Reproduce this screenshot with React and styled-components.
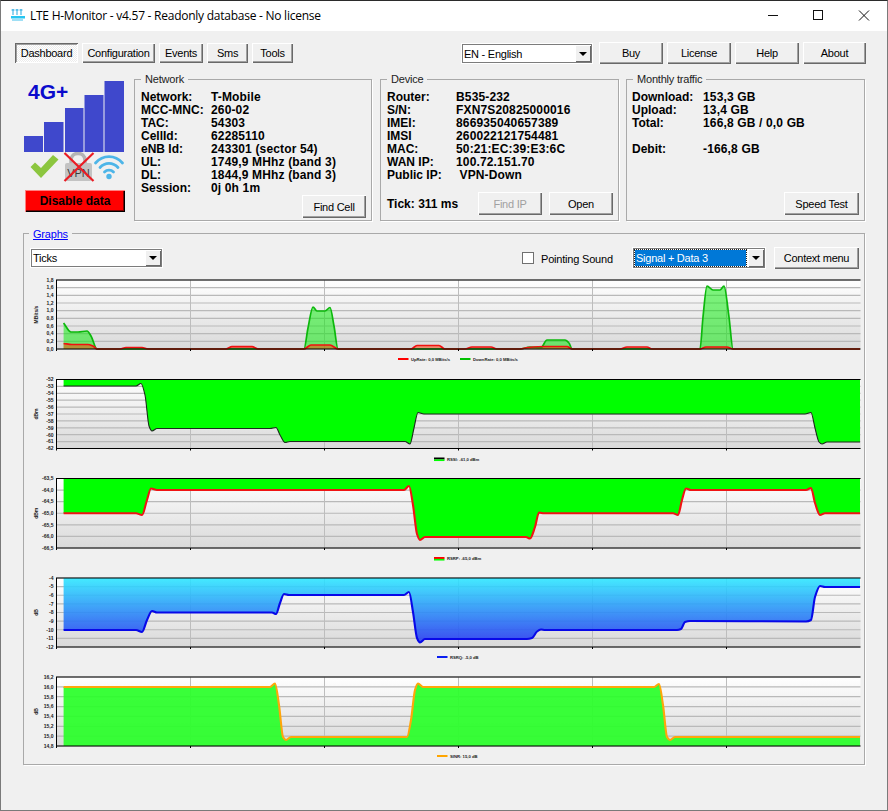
import styled, { createGlobalStyle } from "styled-components";

const GlobalStyle = createGlobalStyle`
  html, body {
    margin: 0;
    padding: 0;
    background: #f0f0f0;
  }
  * {
    box-sizing: border-box;
  }
`;

// monotone cubic through the points, overshoots come from the points themselves
const spline = (pts) => {
  const n = pts.length;
  const sec = [];
  for (let i = 0; i < n - 1; i++) {
    sec.push((pts[i + 1][1] - pts[i][1]) / (pts[i + 1][0] - pts[i][0]));
  }
  const m = pts.map((_, i) => {
    if (i === 0) return sec[0];
    if (i === n - 1) return sec[n - 2];
    if (sec[i - 1] * sec[i] <= 0) return 0;
    return (2 * sec[i - 1] * sec[i]) / (sec[i - 1] + sec[i]);
  });
  let d = `M${pts[0][0]} ${pts[0][1]}`;
  for (let i = 0; i < n - 1; i++) {
    const h = (pts[i + 1][0] - pts[i][0]) / 3;
    const c1y = pts[i][1] + m[i] * h;
    const c2y = pts[i + 1][1] - m[i + 1] * h;
    d += ` C${(pts[i][0] + h).toFixed(1)} ${c1y.toFixed(1)} ${(pts[i + 1][0] - h).toFixed(1)} ${c2y.toFixed(1)} ${pts[i + 1][0]} ${pts[i + 1][1]}`;
  }
  return d;
};

const X0 = 56.5;
const X1 = 860.5;
const START = 63.6;
const VGRID = [190.5, 324.5, 458.5, 592.5, 726.5];

const closeTo = (pts, y) =>
  `${spline(pts)} L${pts[pts.length - 1][0]} ${y} L${pts[0][0]} ${y} Z`;

const downPts = [
  [START, 323], [71, 332], [78, 332], [87, 331], [91, 336], [97, 349], [304, 349],
  [308, 328], [313, 307], [317, 311], [325, 311], [330, 307.5], [334, 326], [338, 349],
  [520, 349], [530, 347], [541, 347.5], [547, 340], [565, 340], [569, 343], [572, 349],
  [700, 349], [703, 317], [707, 286], [713, 290], [720, 290], [724, 286], [729, 317], [733, 349],
  [860, 349],
];

const upPts = [
  [START, 343.5], [72, 344.5], [88, 344.5], [93, 346], [97, 349], [120, 349], [126, 347.5], [142, 347.5], [148, 349],
  [226, 349], [232, 346.7], [252, 346.7], [258, 349], [304, 349], [311, 345], [330, 345], [338, 349],
  [411, 349], [417, 345.5], [439, 345.5], [445, 349], [465, 349], [472, 347], [491, 347], [497, 349],
  [520, 349], [528, 347.5], [545, 346.5], [567, 346.5], [572, 349], [620, 349], [627, 347], [647, 347], [652, 349],
  [700, 349], [706, 347], [727, 347], [733, 349], [860, 349],
];

const rssiPts = [
  [START, 386], [136, 386], [141, 383.5], [145, 395], [149, 426], [152, 431], [157, 428.5], [270, 428.5],
  [276, 427.5], [280, 435], [285, 442.5], [290, 441.5], [405, 441.5], [410, 444], [414, 428], [418, 412.5], [424, 414],
  [805, 414], [811, 412.5], [815, 428], [819, 442], [822, 444], [827, 442], [860, 442],
];

const rsrpPts = [
  [START, 513.3], [136, 513.3], [142, 515], [147, 500], [151, 488.5], [157, 490], [404, 490], [409, 486], [413, 505],
  [417, 534], [420, 540], [425, 537], [526, 537], [530, 538.5], [535, 527], [539, 512.5], [544, 513.3], [673, 513.3],
  [678, 515], [682, 500], [686, 488.5], [691, 490], [806, 490], [811, 488], [815, 503], [820, 515], [825, 513.3], [860, 513.3],
];

const rsrqPts = [
  [START, 630], [136, 630], [142, 632], [147, 620], [152, 611], [157, 612.5], [272, 612.5], [276, 614], [280, 603], [284, 594],
  [289, 595], [404, 595], [409, 592], [413, 612], [417, 638], [420, 642.5], [425, 639], [527, 639], [532, 638], [537, 631.5],
  [541, 629.5], [545, 630], [677, 630], [681, 629], [685, 622], [690, 621], [806, 621.5], [811, 620], [815, 597], [820, 586], [825, 587], [860, 587],
];

const sinrPts = [
  [START, 687], [270, 687], [275, 683.5], [279, 705], [283, 737], [286, 740], [291, 737], [407, 737], [411, 720], [415, 690],
  [418, 683.5], [423, 687], [654, 687], [659, 684], [663, 705], [667, 737], [670, 740], [675, 737], [860, 737],
];

const Chart = ({ index, id, top, bottom, labels, unit, children, legend }) => {
  const step = (bottom - top) / (labels.length - 1);
  return (
    <ChartSvg viewBox={`24 ${273 + 99 * index} 840 99`} aria-label={unit}>
      <defs>
        <linearGradient id={`bg${id}`} x1="0" y1="0" x2="0" y2="1">
          <stop offset="0" stopColor="#ffffff" />
          <stop offset="1" stopColor="#d9d9d9" />
        </linearGradient>
      </defs>
      <rect x={X0} y={top} width={X1 - X0} height={bottom - top} fill={`url(#bg${id})`} />
      {labels.map((l, i) => (
        <line key={l} x1={X0} x2={X1} y1={top + step * i} y2={top + step * i} stroke="#b9b9b9" strokeWidth="1.2" />
      ))}
      {VGRID.map((x) => (
        <line key={x} x1={x} x2={x} y1={top} y2={bottom} stroke="#bdbdbd" strokeWidth="1" />
      ))}
      {children}
      <line x1={X0 - 0.5} x2={X1} y1={top} y2={top} stroke="#000" strokeWidth="1.2" />
      <line x1={X0 - 0.5} x2={X1} y1={bottom} y2={bottom} stroke="#000" strokeWidth="1.2" />
      <line x1={X0} x2={X0} y1={top} y2={bottom + 2} stroke="#000" strokeWidth="1" />
      {VGRID.map((x) => (
        <line key={x} x1={x} x2={x} y1={bottom} y2={bottom + 2} stroke="#000" strokeWidth="1" />
      ))}
      {labels.map((l, i) => (
        <AxisText key={l} x={X0 - 3} y={top + step * i + 1.8} textAnchor="end">
          {l}
        </AxisText>
      ))}
      <AxisText
        x={38}
        y={(top + bottom) / 2}
        textAnchor="middle"
        transform={`rotate(-90 38 ${(top + bottom) / 2})`}
      >
        {unit}
      </AxisText>
      {legend.map((item) => (
        <g key={item.text}>
          <line x1={item.x} x2={item.x + 10.5} y1={bottom + 10} y2={bottom + 10} stroke={item.color} strokeWidth="2" />
          {item.under && (
            <line x1={item.x} x2={item.x + 10.5} y1={bottom + 11.7} y2={bottom + 11.7} stroke={item.under} strokeWidth="1.7" />
          )}
          <LegendText x={item.x + 13} y={bottom + 12}>
            {item.text}
          </LegendText>
        </g>
      ))}
    </ChartSvg>
  );
};

const Signal = () => (
  <SignalBox>
    <NetType>4G+</NetType>
    <BarsSvg viewBox="0 0 101 71" width="101" height="71">
      {[
        [0, 55, 19],
        [20, 41, 19.5],
        [41, 27, 18.5],
        [60.5, 14, 19],
        [80.5, 0, 19.5],
      ].map(([x, y, w]) => (
        <rect key={x} x={x} y={y} width={w} height={71 - y} fill="#3f48cc" />
      ))}
    </BarsSvg>
    <StatusIcons viewBox="0 0 96 30" width="96" height="30">
      <path d="M0.5 15 L5 10.5 L11 16 L23 3 L28.5 7.5 L11 26 Z" fill="#8cc63f" />
      <path d="M41 12 V8.5 C41 -1 55 -1 55 8.5 V12" fill="none" stroke="#b4b4b4" strokeWidth="3.5" />
      <rect x="35" y="11" width="27" height="18" rx="2" fill="#c3c3c3" />
      <VpnText x="48.5" y="24.5" textAnchor="middle">
        VPN
      </VpnText>
      <path d="M34.5 1 L63.5 29 M63.5 1 L34.5 29" stroke="#ea1c24" strokeWidth="2.2" />
      <g fill="none" stroke="#4db5e8" strokeLinecap="round" strokeWidth="2.8">
        <path d="M65.5 11 C73 2.5 85 2.5 92.5 11" />
        <path d="M70 15.5 C75 10 83 10 88 15.5" />
        <path d="M74.5 20 C77 17.5 81 17.5 83.5 20" />
      </g>
      <circle cx="79" cy="24.5" r="2.7" fill="#4db5e8" />
    </StatusIcons>
    <DisableButton>Disable data</DisableButton>
  </SignalBox>
);

const InfoRows = ({ rows, labelWidth }) => (
  <Rows>
    {rows.map(([label, value], i) => (
      <Row key={label + i} $labelWidth={labelWidth}>
        <span>{label}</span>
        <RowValue>{value}</RowValue>
      </Row>
    ))}
  </Rows>
);

const networkRows = [
  ["Network:", "T-Mobile"],
  ["MCC-MNC:", "260-02"],
  ["TAC:", "54303"],
  ["CellId:", "62285110"],
  ["eNB Id:", "243301 (sector 54)"],
  ["UL:", "1749,9 MHhz (band 3)"],
  ["DL:", "1844,9 MHhz (band 3)"],
  ["Session:", "0j 0h 1m"],
];

const deviceRows = [
  ["Router:", "B535-232"],
  ["S/N:", "FXN7S20825000016"],
  ["IMEI:", "866935040657389"],
  ["IMSI", "260022121754481"],
  ["MAC:", "50:21:EC:39:E3:6C"],
  ["WAN IP:", "100.72.151.70"],
  ["Public IP:", "\u00a0VPN-Down"],
];

const trafficRows = [
  ["Download:", "153,3 GB"],
  ["Upload:", "13,4 GB"],
  ["Total:", "166,8 GB / 0,0 GB"],
  ["\u00a0", ""],
  ["Debit:", "-166,8 GB"],
];

const App = () => {
  return (
    <Window>
      <GlobalStyle />
      <TitleBar>
        <AppIcon viewBox="0 0 16 14" width="16" height="14">
          <g fill="none" stroke="#27a9e1" strokeWidth="1">
            <path d="M3 1 V7 M7 1 V7 M11 1 V7" />
            <path d="M1.5 2 H4.5 M5.5 2 H8.5 M9.5 2 H12.5" />
          </g>
          <rect x="1" y="8" width="14" height="2.5" fill="#27c5f1" />
          <rect x="2" y="11" width="11" height="2" fill="#9fdff5" />
        </AppIcon>
        <TitleText>LTE H-Monitor - v4.57 - Readonly database - No license</TitleText>
        <WindowControls>
          <svg width="120" height="12" viewBox="0 0 120 12">
            <g fill="none" stroke="#111" strokeWidth="1">
              <path d="M0 5.5 H10" />
              <rect x="45.5" y="0.5" width="9" height="9" />
              <path d="M91 0.5 L101 10.5 M101 0.5 L91 10.5" />
            </g>
          </svg>
        </WindowControls>
      </TitleBar>

      <Toolbar>
        <TabButton $active $width={63}>Dashboard</TabButton>
        <TabButton $width={73}>Configuration</TabButton>
        <TabButton $width={44}>Events</TabButton>
        <TabButton $width={41}>Sms</TabButton>
        <TabButton $width={41}>Tools</TabButton>
        <Spacer />
        <Combo $width={132} $height={21}>
          <ComboText>EN - English</ComboText>
          <ComboArrow />
        </Combo>
        <ToolbarRight>
          <TabButton $width={64} $height={22}>Buy</TabButton>
          <TabButton $width={64} $height={22}>License</TabButton>
          <TabButton $width={64} $height={22}>Help</TabButton>
          <TabButton $width={63} $height={22}>About</TabButton>
        </ToolbarRight>
      </Toolbar>

      <Panels>
        <Signal />
        <GroupBox $width={238} $gap={8}>
          <GroupLabel>Network</GroupLabel>
          <InfoRows rows={networkRows} labelWidth={70} />
          <GroupFooter>
            <TabButton $width={64} $height={23}>Find Cell</TabButton>
          </GroupFooter>
        </GroupBox>
        <GroupBox $width={239} $gap={7}>
          <GroupLabel>Device</GroupLabel>
          <InfoRows rows={deviceRows} labelWidth={69} />
          <GroupFooter>
            <TickText>Tick: 311 ms</TickText>
            <FooterButtons>
              <TabButton $width={64} $height={23} $disabled>Find IP</TabButton>
              <TabButton $width={64} $height={23}>Open</TabButton>
            </FooterButtons>
          </GroupFooter>
        </GroupBox>
        <GroupBox $width={239} $pad={5}>
          <GroupLabel>Monthly traffic</GroupLabel>
          <InfoRows rows={trafficRows} labelWidth={71} />
          <GroupFooter>
            <TabButton $width={75} $height={23}>Speed Test</TabButton>
          </GroupFooter>
        </GroupBox>
      </Panels>

      <GraphsBox>
        <GraphsLabel>Graphs</GraphsLabel>
        <GraphControls>
          <Combo $width={133} $height={20}>
            <ComboText>Ticks</ComboText>
            <ComboArrow />
          </Combo>
          <ControlsRight>
            <CheckBox />
            <SoundLabel>Pointing Sound</SoundLabel>
            <Combo $width={134} $height={22}>
              <ComboText $selected>Signal + Data 3</ComboText>
              <ComboArrow />
            </Combo>
            <ContextGap />
            <TabButton $width={85} $height={22}>Context menu</TabButton>
          </ControlsRight>
        </GraphControls>

        <Chart
          index={0}
          id="rate"
          top={280}
          bottom={349}
          unit="MBits/s"
          labels={["1,8", "1,6", "1,4", "1,2", "1,0", "0,8", "0,6", "0,4", "0,2", "0,0"]}
          legend={[
            { x: 398, color: "#ff0000", text: "UpRate: 0,0 MBits/s" },
            { x: 460, color: "#00c000", text: "DownRate: 0,0 MBits/s" },
          ]}
        >
          <path d={closeTo(downPts, 349)} fill="#00ee00" fillOpacity="0.5" />
          <path d={closeTo(upPts, 349)} fill="#ff4000" fillOpacity="0.5" />
          <path d={spline(downPts)} fill="none" stroke="#0cb80c" strokeWidth="1.7" />
          <path d={spline(upPts)} fill="none" stroke="#f01010" strokeWidth="1.7" />
        </Chart>

        <Chart
          index={1}
          id="rssi"
          top={379.5}
          bottom={448.5}
          unit="dBm"
          labels={["-52", "-53", "-54", "-55", "-56", "-57", "-58", "-59", "-60", "-61", "-62"]}
          legend={[{ x: 434, color: "#000", under: "#00ff00", text: "RSSI: -61,0 dBm" }]}
        >
          <path d={closeTo(rssiPts, 379.5)} fill="#00ff00" />
          <path d={spline(rssiPts)} fill="none" stroke="#1c2a1c" strokeWidth="1.1" />
        </Chart>

        <Chart
          index={2}
          id="rsrp"
          top={478.5}
          bottom={548}
          unit="dBm"
          labels={["-63,5", "-64,0", "-64,5", "-65,0", "-65,5", "-66,0", "-66,5"]}
          legend={[{ x: 434, color: "#ff0000", under: "#00ff00", text: "RSRP: -65,0 dBm" }]}
        >
          <path d={closeTo(rsrpPts, 478.5)} fill="#00ff00" />
          <path d={spline(rsrpPts)} fill="none" stroke="#f01414" strokeWidth="2.1" />
        </Chart>

        <Chart
          index={3}
          id="rsrq"
          top={578}
          bottom={647}
          unit="dB"
          labels={["-4", "-5", "-6", "-7", "-8", "-9", "-10", "-11", "-12"]}
          legend={[{ x: 437, color: "#0a1ef0", text: "RSRQ: -5,0 dB" }]}
        >
          <defs>
            <linearGradient id="rsrqFill" gradientUnits="userSpaceOnUse" x1="0" y1="578" x2="0" y2="642">
              <stop offset="0" stopColor="#2fe8ff" />
              <stop offset="1" stopColor="#2a3cf2" />
            </linearGradient>
          </defs>
          <path d={closeTo(rsrqPts, 578)} fill="url(#rsrqFill)" fillOpacity="0.9" />
          <path d={spline(rsrqPts)} fill="none" stroke="#0808e8" strokeWidth="2.1" />
        </Chart>

        <Chart
          index={4}
          id="sinr"
          top={677}
          bottom={746}
          unit="dB"
          labels={["16,2", "16,0", "15,8", "15,6", "15,4", "15,2", "15,0", "14,8"]}
          legend={[{ x: 437, color: "#ffa500", text: "SINR: 15,0 dB" }]}
        >
          <path d={closeTo(sinrPts, 746)} fill="#2aff2a" fillOpacity="0.93" />
          <path d={spline(sinrPts)} fill="none" stroke="#ffa50a" strokeWidth="2.1" />
        </Chart>
      </GraphsBox>
    </Window>
  );
};

const uiFont = `"Liberation Sans", Arial, sans-serif`;

const Window = styled.div`
  width: 888px;
  height: 811px;
  overflow: hidden;
  display: flex;
  flex-direction: column;
  background: #f0f0f0;
  border-top: 1px solid #2b2b2b;
  border-left: 1px solid #7a7a7a;
  border-right: 1px solid #7a7a7a;
  border-bottom: 1px solid #7a7a7a;
  font-family: ${uiFont};
  font-size: 11px;
  color: #000;
`;

const TitleBar = styled.div`
  height: 30px;
  flex: none;
  display: flex;
  align-items: center;
  background: #fff;
  padding-left: 9px;
`;

const AppIcon = styled.svg`
  flex: none;
  margin-right: 4px;
  margin-top: -2px;
`;

const TitleText = styled.span`
  font-family: "Open Sans", "Noto Sans", sans-serif;
  font-size: 12px;
  letter-spacing: -0.25px;
  margin-top: -1px;
`;

const WindowControls = styled.div`
  margin-left: auto;
  display: flex;
  width: 120px;
  position: relative;
  left: 1px;
`;

const Toolbar = styled.div`
  display: flex;
  align-items: flex-start;
  flex: none;
  height: 48px;
  padding: 12px 21px 0 14px;
  gap: 4px;
`;

const Spacer = styled.div`
  flex: 1;
`;

const ToolbarRight = styled.div`
  display: flex;
  gap: 4px;
  margin-left: 2px;
  margin-top: -1px;
`;

const TabButton = styled.div`
  width: ${({ $width }) => $width}px;
  height: ${({ $height }) => $height || 20}px;
  flex: none;
  display: flex;
  align-items: center;
  justify-content: center;
  font-size: 11px;
  letter-spacing: -0.25px;
  white-space: nowrap;
  color: ${({ $disabled }) => ($disabled ? "#a0a0a0" : "#000")};
  background: ${({ $active }) =>
    $active ? "repeating-conic-gradient(#ffffff 0 25%, #ececec 0 50%) 0 0 / 2px 2px" : "#f0f0f0"};
  box-shadow: ${({ $active }) =>
    $active
      ? "inset 1px 1px 0 #696969, inset -1px -1px 0 #fff, inset 2px 2px 0 #a0a0a0"
      : "inset 1px 1px 0 #fff, inset -1px -1px 0 #696969, inset -2px -2px 0 #a0a0a0"};
`;

const Combo = styled.div`
  width: ${({ $width }) => $width}px;
  height: ${({ $height }) => $height}px;
  flex: none;
  display: flex;
  align-items: stretch;
  padding: 2px;
  background: #fff;
  box-shadow: inset 0 0 0 1px #fff, inset 0 0 0 2px #7c7c7c;
`;

const ComboText = styled.div`
  flex: 1;
  display: flex;
  align-items: center;
  padding-left: 1px;
  font-size: 11px;
  letter-spacing: -0.25px;
  margin: ${({ $selected }) => ($selected ? "1px 2px 1px 1px" : "0")};
  color: ${({ $selected }) => ($selected ? "#fff" : "#000")};
  background: ${({ $selected }) => ($selected ? "#0078d7" : "transparent")};
  outline: ${({ $selected }) => ($selected ? "1px dotted #222" : "none")};
`;

const ComboArrow = styled.div`
  width: 16px;
  flex: none;
  position: relative;
  background: #f0f0f0;
  box-shadow: inset 1px 1px 0 #fff, inset -1px -1px 0 #696969;

  &::after {
    content: "";
    position: absolute;
    left: 4px;
    top: calc(50% - 2px);
    border-left: 4px solid transparent;
    border-right: 4px solid transparent;
    border-top: 4px solid #000;
  }
`;

const Panels = styled.div`
  display: flex;
  flex: none;
  height: 142px;
  padding-left: 23px;
`;

const SignalBox = styled.div`
  width: 110px;
  flex: none;
  position: relative;
  display: flex;
  flex-direction: column;
  padding-top: 2px;
`;

const NetType = styled.div`
  position: absolute;
  left: 4px;
  top: 1px;
  font-size: 21px;
  font-weight: 700;
  color: #0a0acc;
`;

const BarsSvg = styled.svg`
  display: block;
`;

const StatusIcons = styled.svg`
  display: block;
  margin-left: 6px;
`;

const VpnText = styled.text`
  font-family: ${uiFont};
  font-size: 11px;
  fill: #3a3a3a;
`;

const DisableButton = styled.div`
  width: 100px;
  height: 22px;
  margin: 8px 0 0 1px;
  display: flex;
  align-items: center;
  justify-content: center;
  font-size: 12px;
  font-weight: 700;
  background: #ff0000;
  box-shadow: inset 1px 1px 0 #ff8080, inset -1px -1px 0 #000, inset -2px -2px 0 #800000;
`;

const GroupBox = styled.div`
  position: relative;
  width: ${({ $width }) => $width}px;
  flex: none;
  margin-right: ${({ $gap }) => $gap || 0}px;
  display: flex;
  flex-direction: column;
  padding: 11px 5px 5px ${({ $pad }) => $pad || 6}px;
  border: 1px solid #a9a9a9;
  box-shadow: 1px 1px 0 #fff;
`;

const GroupLabel = styled.span`
  position: absolute;
  left: 6px;
  top: -8px;
  padding: 0 4px;
  line-height: 14px;
  background: #f0f0f0;
  font-size: 11px;
  letter-spacing: -0.2px;
  color: #222;
`;

const Rows = styled.div`
  display: flex;
  flex-direction: column;
`;

const Row = styled.div`
  display: grid;
  grid-template-columns: ${({ $labelWidth }) => $labelWidth}px 1fr;
  height: 13px;
  line-height: 13px;
  font-size: 12px;
  font-weight: 700;
  white-space: nowrap;
`;

const RowValue = styled.span`
  letter-spacing: 0.15px;
`;

const GroupFooter = styled.div`
  margin-top: auto;
  display: flex;
  justify-content: flex-end;
  align-items: center;
`;

const TickText = styled.span`
  font-size: 12px;
  font-weight: 700;
  margin-right: auto;
`;

const FooterButtons = styled.div`
  display: flex;
  gap: 7px;
`;

const GraphsBox = styled.div`
  position: relative;
  flex: none;
  width: 842px;
  height: 532px;
  margin: 12px 0 0 22px;
  border: 1px solid #a9a9a9;
  box-shadow: 1px 1px 0 #fff;
`;

const GraphsLabel = styled.a`
  position: absolute;
  left: 5px;
  top: -7px;
  padding: 0 4px;
  line-height: 14px;
  background: #f0f0f0;
  color: #0000ff;
  text-decoration: underline;
  font-size: 11px;
  letter-spacing: -0.2px;
`;

const GraphControls = styled.div`
  height: 39px;
  display: flex;
  align-items: flex-start;
  justify-content: space-between;
  padding: 14px 5px 0 6px;
`;

const ControlsRight = styled.div`
  display: flex;
  align-items: center;
  margin-top: -1px;
  height: 22px;
`;

const ContextGap = styled.div`
  width: 8px;
`;

const CheckBox = styled.div`
  width: 12px;
  height: 12px;
  background: #fff;
  box-shadow: inset 0 0 0 1px #707070;
  margin-right: 7px;
`;

const SoundLabel = styled.span`
  font-size: 11px;
  letter-spacing: -0.2px;
  width: 91px;
  margin-top: 1px;
`;

const ChartSvg = styled.svg`
  display: block;
  width: 840px;
  height: 99px;
`;

const AxisText = styled.text`
  font-family: ${uiFont};
  font-size: 5px;
  font-weight: 700;
  fill: #222;
`;

const LegendText = styled(AxisText)`
  font-size: 4.2px;
`;

export default App;
